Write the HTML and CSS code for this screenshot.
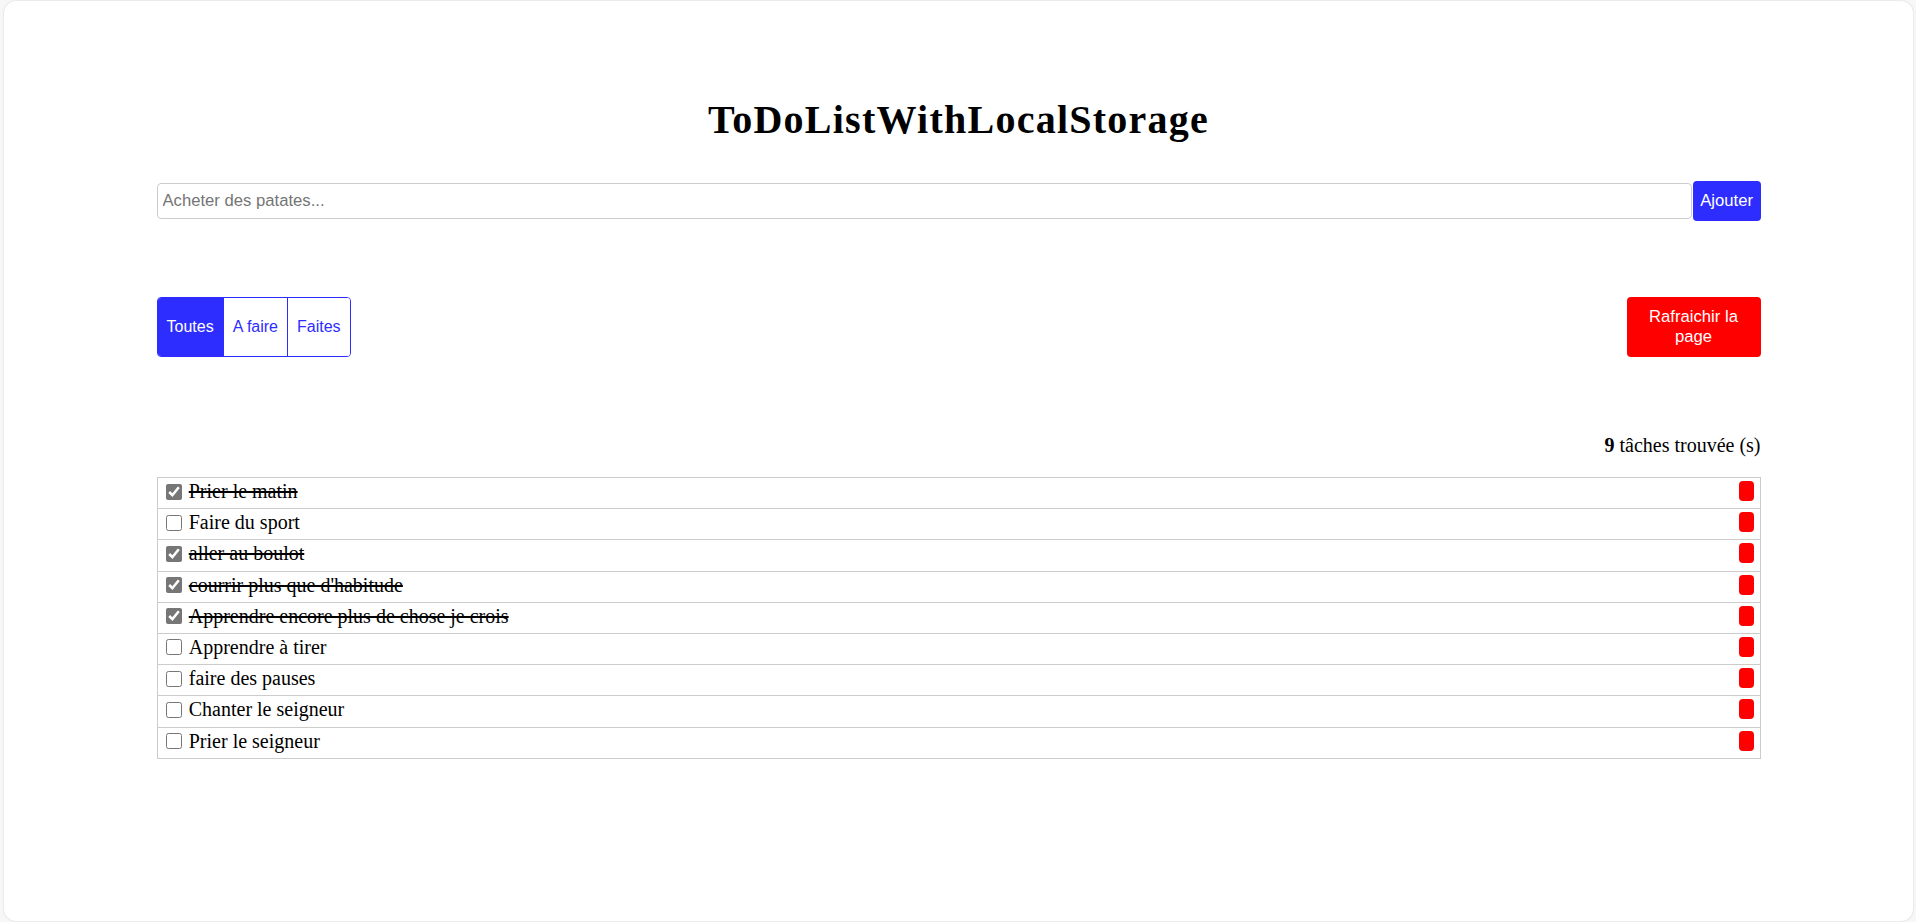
FILE: index.html
```html
<!DOCTYPE html>
<html lang="fr">
<head>
<meta charset="utf-8">
<title>ToDoListWithLocalStorage</title>
<link rel="stylesheet" href="styles.css">
</head>
<body>
<div class="card">
  <div class="container">
    <h1 class="title">ToDoListWithLocalStorage</h1>
    <form class="add-row">
      <input class="add-input" type="text" placeholder="Acheter des patates...">
      <button class="add-btn" type="button">Ajouter</button>
    </form>
    <div class="toolbar">
      <div class="filters">
        <button class="filter active" type="button">Toutes</button>
        <button class="filter" type="button">A faire</button>
        <button class="filter" type="button">Faites</button>
      </div>
      <button class="refresh" type="button">Rafraichir la page</button>
    </div>
    <p class="count"><b>9</b> tâches trouvée (s)</p>
    <ul class="list">
      <li class="item done"><label class="lbl"><input class="chk" type="checkbox" checked> <span class="txt">Prier le matin</span></label><button class="del" type="button"></button></li>
      <li class="item"><label class="lbl"><input class="chk" type="checkbox"> <span class="txt">Faire du sport</span></label><button class="del" type="button"></button></li>
      <li class="item done"><label class="lbl"><input class="chk" type="checkbox" checked> <span class="txt">aller au boulot</span></label><button class="del" type="button"></button></li>
      <li class="item done"><label class="lbl"><input class="chk" type="checkbox" checked> <span class="txt">courrir plus que d'habitude</span></label><button class="del" type="button"></button></li>
      <li class="item done"><label class="lbl"><input class="chk" type="checkbox" checked> <span class="txt">Apprendre encore plus de chose je crois</span></label><button class="del" type="button"></button></li>
      <li class="item"><label class="lbl"><input class="chk" type="checkbox"> <span class="txt">Apprendre à tirer</span></label><button class="del" type="button"></button></li>
      <li class="item"><label class="lbl"><input class="chk" type="checkbox"> <span class="txt">faire des pauses</span></label><button class="del" type="button"></button></li>
      <li class="item"><label class="lbl"><input class="chk" type="checkbox"> <span class="txt">Chanter le seigneur</span></label><button class="del" type="button"></button></li>
      <li class="item"><label class="lbl"><input class="chk" type="checkbox"> <span class="txt">Prier le seigneur</span></label><button class="del" type="button"></button></li>
    </ul>
  </div>
</div>
</body>
</html>
```
FILE: styles.css
```css
html, body {
  margin: 0;
  padding: 0;
  background: #f7f7f7;
}
body {
  font-family: "Liberation Serif", "Times New Roman", serif;
  font-size: 20px;
  color: #000;
}
.card {
  margin: 1px 3px 1px 4px;
  height: 920px;
  box-sizing: border-box;
  background: #fff;
  border-radius: 12px;
  box-shadow: 0 0 2px rgba(0, 0, 0, 0.18);
  overflow: hidden;
}
.container {
  width: 1604px;
  margin: 0 auto;
  padding-top: 96px;
}
.title {
  margin: 0;
  text-align: center;
  font-size: 40px;
  line-height: 46px;
  font-weight: bold;
  letter-spacing: 1.25px;
}
.add-row {
  margin: 38px 0 0;
  display: flex;
  align-items: center;
  gap: 1px;
}
.add-input {
  flex: 1;
  height: 36px;
  box-sizing: border-box;
  border: 1px solid #cccccc;
  border-radius: 4px;
  padding: 0 5px;
  font-family: "Liberation Sans", Arial, sans-serif;
  font-size: 16.67px;
  color: #000;
  outline: none;
}
.add-input::placeholder {
  color: #757575;
}
.add-btn {
  height: 40px;
  box-sizing: border-box;
  padding: 0 7.5px;
  border: none;
  border-radius: 4px;
  background: #2d2dff;
  color: #fff;
  font-family: "Liberation Sans", Arial, sans-serif;
  font-size: 16.67px;
}
.toolbar {
  margin-top: 76px;
  display: flex;
  justify-content: space-between;
  align-items: stretch;
}
.filters {
  display: flex;
  border: 1px solid #2d2dff;
  border-radius: 4px;
  overflow: hidden;
}
.filter {
  padding: 0 9px;
  border: none;
  border-left: 1px solid #2d2dff;
  background: #fff;
  color: #2d2dff;
  font-family: "Liberation Sans", Arial, sans-serif;
  font-size: 16px;
}
.filter:first-child {
  border-left: none;
}
.filter.active {
  background: #2d2dff;
  color: #fff;
}
.refresh {
  width: 134px;
  height: 60px;
  box-sizing: border-box;
  padding: 0 18px;
  border: none;
  border-radius: 4px;
  background: #ff0000;
  color: #fff;
  font-family: "Liberation Sans", Arial, sans-serif;
  font-size: 16.67px;
  line-height: 20px;
}
.count {
  margin: 77px 0 0;
  text-align: right;
  line-height: 23px;
}
.list {
  list-style: none;
  margin: 20px 0 0;
  padding: 0;
  border: 1px solid #cccccc;
  border-bottom: none;
}
.item {
  display: flex;
  justify-content: space-between;
  align-items: flex-start;
  padding: 2px 6px 5.2px 3.75px;
  border-bottom: 1px solid #cccccc;
  line-height: 23px;
}
.lbl {
  display: flex;
  align-items: center;
}
.chk {
  width: 16px;
  height: 16px;
  margin: 0 6.5px 0 5px;
  accent-color: #767676;
}
.done .txt {
  text-decoration: line-through;
}
.del {
  width: 15px;
  height: 20px;
  margin-top: 1px;
  padding: 0;
  border: none;
  border-radius: 4px;
  background: #ff0000;
}
```
